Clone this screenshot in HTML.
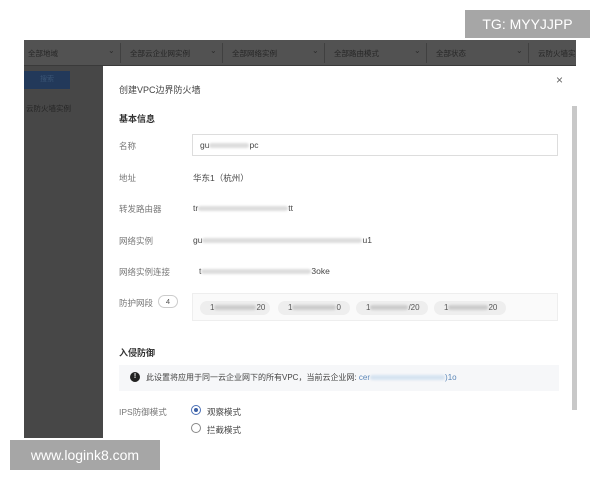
<!DOCTYPE html>
<html><head><meta charset="utf-8"><style>
*{margin:0;padding:0;box-sizing:border-box}
body{width:600px;height:480px;background:#fff;position:relative;overflow:hidden;font-family:"Liberation Sans","Noto Sans CJK SC",sans-serif;font-size:8px;color:#333}
.bg{position:absolute;left:24px;top:40px;width:552px;height:398px;background:#474747}
.filt{position:absolute;left:24px;top:40px;width:552px;height:26px;background:#525252;border-bottom:1px solid #3a3a3a}
.filt span{position:absolute;top:8px;color:#262626;font-size:7.5px}
.filt i{position:absolute;top:6px;color:#2c2c2c;font-style:normal;font-size:8px}
.filt b{position:absolute;top:3px;width:1px;height:20px;background:#404040}
.btn{position:absolute;left:24px;top:71px;width:46px;height:18px;background:#22395a;color:#3a5575;font-size:7px;text-align:center;line-height:18px}
.side{position:absolute;left:26px;top:103px;color:#262626;font-size:7.5px}
.modal{position:absolute;left:103px;top:66px;width:473px;height:372px;background:#fff}
.t{position:absolute;font-size:9px;color:#444}
.lab{position:absolute;left:16px;font-size:8.5px;color:#777}
.val{position:absolute;left:90px;font-size:8.5px;color:#444}
.blur{display:inline-block;height:5px;background:#ddd;border-radius:3px;vertical-align:middle;filter:blur(1px)}
.tag{position:absolute;top:7px;height:14px;border-radius:7px;background:#eee;font-size:8px;color:#555;line-height:14px;padding-left:10px}
</style></head><body>
<div class="bg"></div>
<div class="filt">
<span style="left:4px">全部地域</span><i style="left:84px">⌄</i><b style="left:96px"></b>
<span style="left:106px">全部云企业网实例</span><i style="left:186px">⌄</i><b style="left:198px"></b>
<span style="left:208px">全部网络实例</span><i style="left:288px">⌄</i><b style="left:300px"></b>
<span style="left:310px">全部路由模式</span><i style="left:390px">⌄</i><b style="left:402px"></b>
<span style="left:412px">全部状态</span><i style="left:492px">⌄</i><b style="left:504px"></b>
<span style="left:514px">云防火墙实</span>
</div>
<div class="btn">搜索</div>
<div class="side">云防火墙实例</div>
<div class="modal">
<div class="t" style="left:16px;top:17px">创建VPC边界防火墙</div>
<div class="t" style="left:453px;top:7px;font-size:12px;color:#666">×</div>
<div style="position:absolute;left:469px;top:40px;width:5px;height:304px;background:#c8c8c8"></div>
<div class="t" style="left:16px;top:46px;font-weight:bold;color:#333">基本信息</div>
<div class="lab" style="top:74px">名称</div>
<div style="position:absolute;left:89px;top:68px;width:366px;height:22px;border:1px solid #ddd"></div>
<div class="val" style="left:97px;top:74px">gu<span class="blur" style="width:40px"></span>pc</div>
<div class="lab" style="top:106px">地址</div><div class="val" style="top:106px">华东1（杭州）</div>
<div class="lab" style="top:137px">转发路由器</div><div class="val" style="top:137px">tr<span class="blur" style="width:90px"></span>tt</div>
<div class="lab" style="top:169px">网络实例</div><div class="val" style="top:169px">gu<span class="blur" style="width:160px"></span>u1</div>
<div class="lab" style="top:200px">网络实例连接</div><div class="val" style="left:96px;top:200px">t<span class="blur" style="width:110px"></span>3oke</div>
<div class="lab" style="top:231px">防护网段</div>
<div style="position:absolute;left:55px;top:229px;width:20px;height:13px;border:1px solid #ccc;border-radius:7px;font-size:7.5px;text-align:center;line-height:11px;color:#555">4</div>
<div style="position:absolute;left:89px;top:227px;width:366px;height:28px;border:1px solid #eee;background:#fafafa">
<div class="tag" style="left:7px;width:70px">1<span class="blur" style="width:42px;background:#ccc"></span>20</div>
<div class="tag" style="left:85px;width:72px">1<span class="blur" style="width:44px;background:#ccc"></span>0</div>
<div class="tag" style="left:163px;width:72px">1<span class="blur" style="width:38px;background:#ccc"></span>/20</div>
<div class="tag" style="left:241px;width:72px">1<span class="blur" style="width:40px;background:#ccc"></span>20</div>
</div>
<div class="t" style="left:16px;top:280px;font-weight:bold;color:#333">入侵防御</div>
<div style="position:absolute;left:16px;top:299px;width:440px;height:26px;background:#f6f7f9"></div>
<div style="position:absolute;left:27px;top:306px;width:10px;height:10px;border-radius:50%;background:#222;color:#fff;font-size:7px;text-align:center;line-height:10px;font-weight:bold">!</div>
<div class="t" style="left:43px;top:306px;font-size:8px">此设置将应用于同一云企业网下的所有VPC，当前云企业网: <span style="color:#5a86b8">cer<span class="blur" style="width:75px;background:#d6e3f0"></span>)1o</span></div>
<div class="lab" style="top:340px">IPS防御模式</div>
<div style="position:absolute;left:88px;top:339px;width:10px;height:10px;border:1px solid #4a6fb5;border-radius:50%"><div style="margin:2px;width:4px;height:4px;border-radius:50%;background:#3a5fa5"></div></div>
<div class="val" style="left:104px;top:340px">观察模式</div>
<div style="position:absolute;left:88px;top:357px;width:10px;height:10px;border:1px solid #888;border-radius:50%"></div>
<div class="val" style="left:104px;top:358px">拦截模式</div>
</div>
<div style="position:absolute;left:465px;top:10px;width:125px;height:28px;background:#a6a6a6;color:#fff;font-size:14px;line-height:28px;text-align:center">TG: MYYJJPP</div>
<div style="position:absolute;left:10px;top:440px;width:150px;height:30px;background:#a6a6a6;color:#fff;font-size:14px;line-height:30px;text-align:center">www.logink8.com</div>
</body></html>
